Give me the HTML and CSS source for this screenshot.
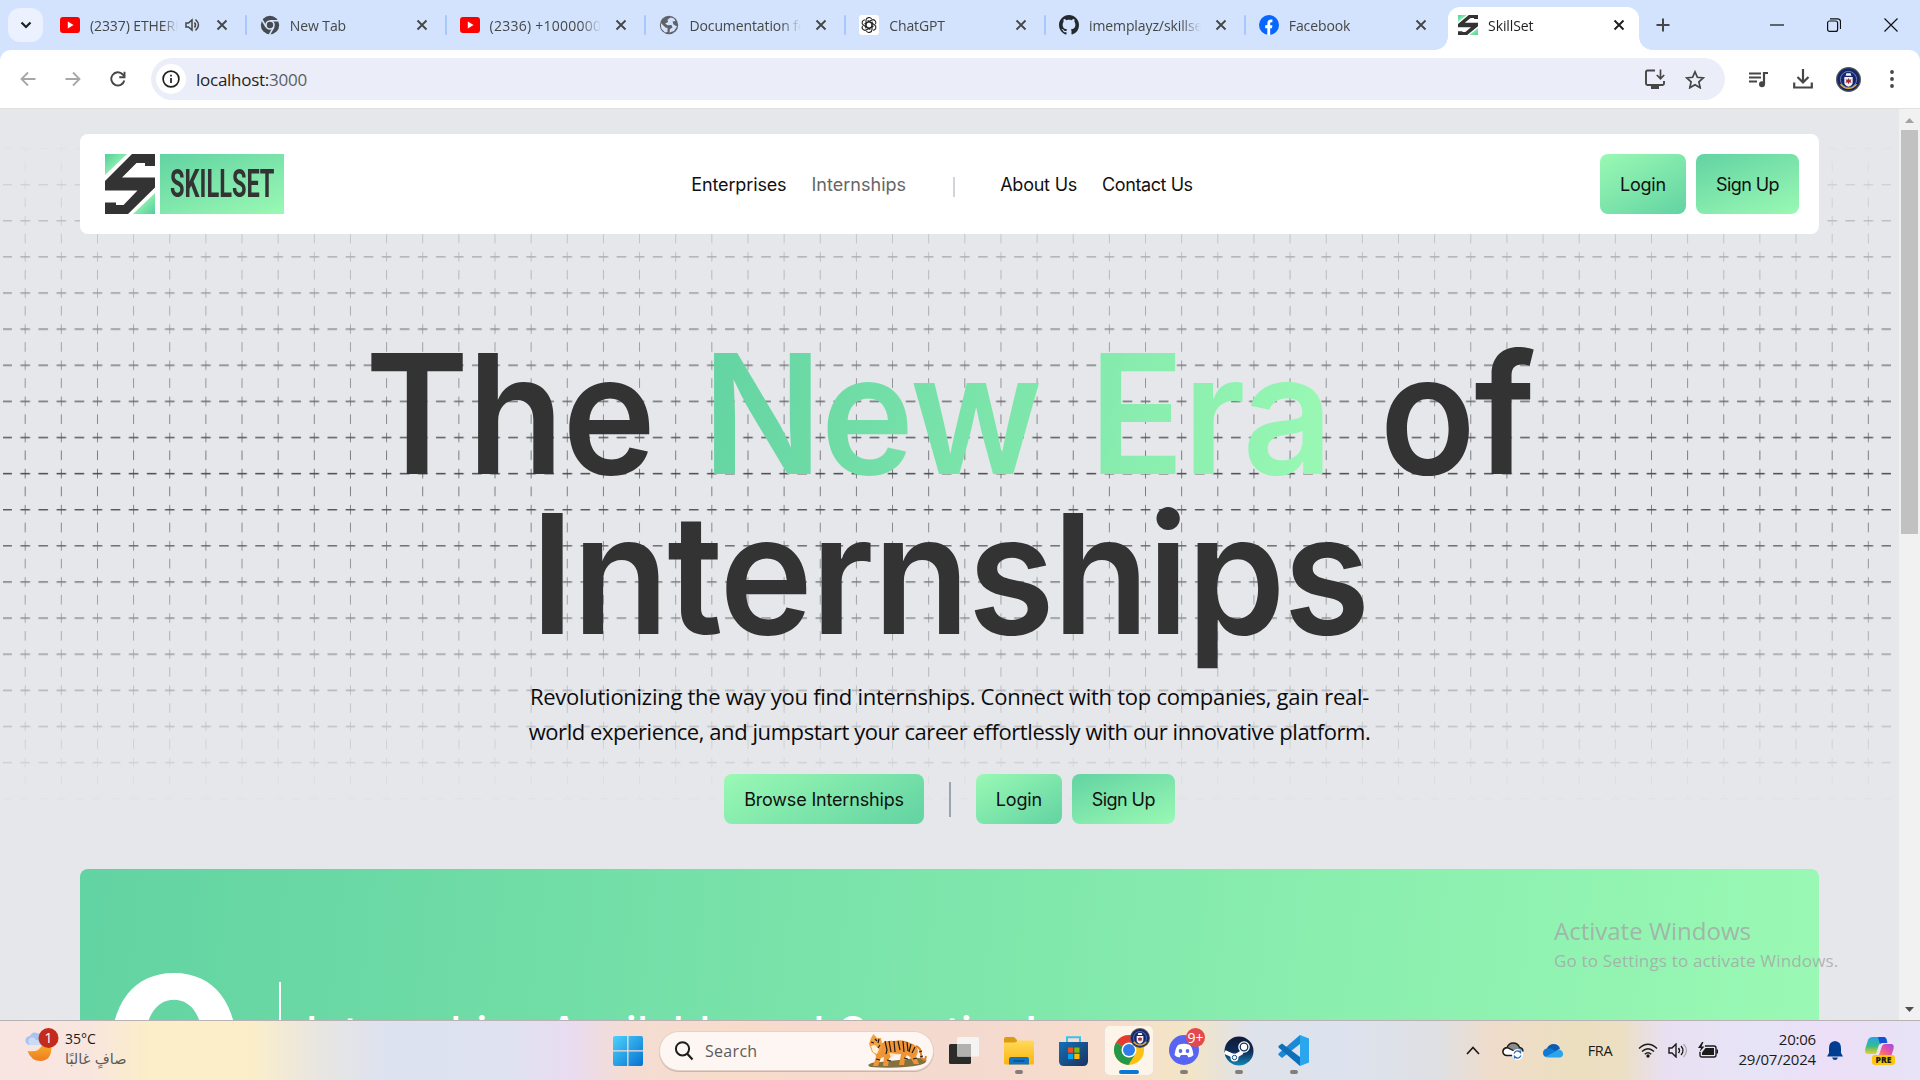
FILE: index.html
```html
<!DOCTYPE html>
<html lang="en">
<head>
<meta charset="utf-8">
<title>SkillSet</title>
<link rel="stylesheet" href="styles.css">
</head>
<body>
<svg class="defs" width="0" height="0" aria-hidden="true">
  <defs>
    <linearGradient id="mint" x1="0" y1="0" x2="1" y2="1"><stop offset="0" stop-color="#55cd9b"/><stop offset=".7" stop-color="#9af9b4"/></linearGradient>
    <linearGradient id="mintBack" x1="1" y1="1" x2="0" y2="0"><stop offset="0" stop-color="#55cd9b"/><stop offset=".7" stop-color="#9af9b4"/></linearGradient>
    <linearGradient id="winBlue" x1="0" y1="0" x2="1" y2="1"><stop offset="0" stop-color="#4cd2fc"/><stop offset="1" stop-color="#0671d0"/></linearGradient>
    <linearGradient id="folderYellow" x1="0" y1="0" x2="0" y2="1"><stop offset="0" stop-color="#ffd95c"/><stop offset="1" stop-color="#fcb50e"/></linearGradient>
    <linearGradient id="storeBlue" x1="0" y1="0" x2="1" y2="1"><stop offset="0" stop-color="#1270b8"/><stop offset="1" stop-color="#1c3160"/></linearGradient>
    <linearGradient id="steamBlue" x1="0" y1="0" x2="0" y2="1"><stop offset="0" stop-color="#111a35"/><stop offset=".5" stop-color="#0f2a56"/><stop offset="1" stop-color="#1387b8"/></linearGradient>
    <linearGradient id="moonOrange" x1="0" y1="0" x2="0" y2="1"><stop offset="0" stop-color="#f5b02d"/><stop offset="1" stop-color="#f07a1f"/></linearGradient>
    <linearGradient id="copilotA" x1="0" y1="0" x2="0" y2="1"><stop offset="0" stop-color="#1fa5ee"/><stop offset=".55" stop-color="#3dbb86"/><stop offset="1" stop-color="#f2d21c"/></linearGradient>
    <linearGradient id="copilotB" x1="1" y1="0" x2="0" y2="1"><stop offset="0" stop-color="#9a4be8"/><stop offset=".55" stop-color="#e8559f"/><stop offset="1" stop-color="#f98a4b"/></linearGradient>
    <symbol id="x" viewBox="0 0 12 12"><path d="M1.500 1.500l9 9M10.500 1.500l-9 9" stroke="currentColor" stroke-width="1.900" fill="none"/></symbol>
    <symbol id="yt" viewBox="0 0 20 16"><rect width="20" height="16" rx="3" fill="#f00"/><path d="M7.800 4.600L13.500 8l-5.700 3.400z" fill="#fff"/></symbol>
    <symbol id="skill" viewBox="0 0 50 60" preserveAspectRatio="none">
      <path d="M0 0h22L0 21z" fill="url(#mint)"/><path d="M50 39v21H28z" fill="url(#mintBack)"/>
      <path d="M27 0h23v12H40V9h-8.500L17 23.500h33v10L23 60H0V48.500h11V51h7.500l14-14.500H0V27z" fill="#333"/>
    </symbol>
    <symbol id="seal" viewBox="0 0 24 24"><circle cx="12" cy="12" r="12" fill="#555a52"/><circle cx="12" cy="12" r="10.800" fill="#14266e"/><path d="M3.500 16.500a10 10 0 0 0 17 0l-2 0a8 8 0 0 1-13 0z" fill="#e8b02c"/><circle cx="12" cy="12" r="7.800" fill="none" stroke="#8f9cc9" stroke-width=".7"/><path d="M8 9.500h8v5.500q0 2.500-4 4-4-1.500-4-4zM10 6h4l.8 2.500H9.200z" fill="#f4f6fa"/><path d="M12 10.500l.9 1.800 2-.6-.9 1.800.9 1.800-2-.6-.9 1.800-.9-1.800-2 .6.900-1.800-.9-1.800 2 .6z" fill="#a22d35"/></symbol>
  </defs>
</svg>

<div class="tabstrip">
  <button class="tab-search"><svg width="12" height="8" viewBox="0 0 12 8"><path d="M1.500 1.500L6 6l4.500-4.500" fill="none" stroke="#1f1f1f" stroke-width="2.200"/></svg></button>
  <div class="tab playing"><svg class="fav yt"><use href="#yt"/></svg><span class="label">(2337) ETHEREA</span><svg class="sound" width="15" height="14" viewBox="0 0 15 14"><path d="M1 5h2.500L7 2v10L3.500 9H1z" fill="none" stroke="#444746" stroke-width="1.500"/><path d="M9.500 4.500q2 2.500 0 5M10.500 1.500q6 5.500 0 11" fill="none" stroke="#444746" stroke-width="1.500"/></svg><svg class="close"><use href="#x"/></svg></div>
  <div class="tab"><svg class="fav" viewBox="0 0 20 20"><circle cx="10" cy="10" r="9.200" fill="#474b50"/><circle cx="10" cy="10" r="4" fill="none" stroke="#d3e3fd" stroke-width="1.600"/><path d="M10 5.800h9M6.200 12L1.800 4.500M13.800 12l-4.500 7.800" stroke="#d3e3fd" stroke-width="1.600"/></svg><span class="label">New Tab</span><svg class="close"><use href="#x"/></svg></div>
  <div class="tab"><svg class="fav yt"><use href="#yt"/></svg><span class="label wide">(2336) +1000000</span><svg class="close"><use href="#x"/></svg></div>
  <div class="tab"><svg class="fav" viewBox="0 0 20 20"><circle cx="10" cy="10" r="9.200" fill="#5f6368"/><path d="M11.500 2.500l-3 2.200.5 2.300-2.800 1.500 2.300 1.700 4-.2 1 2.500-2.500 1.500-.5 3.500 4.500-1.500 3-4.500-3.500-2-1-3 3-.5-1.500-2.500zM1.800 8l4.700 4.500 2 .5v4l-2.500.5-3.700-4z" fill="#d3e3fd"/></svg><span class="label">Documentation for</span><svg class="close"><use href="#x"/></svg></div>
  <div class="tab"><svg class="fav" viewBox="0 0 20 20"><rect width="20" height="20" rx="3" fill="#fff"/><g transform="translate(10 10)" fill="none" stroke="#222" stroke-width="1.100"><path id="p" d="M-3-1.700V-4.500a3 3 0 0 1 5.600-1.500M-3 1.600L.3 3.500 4.500 1"/><use href="#p" transform="rotate(60)"/><use href="#p" transform="rotate(120)"/><use href="#p" transform="rotate(180)"/><use href="#p" transform="rotate(240)"/><use href="#p" transform="rotate(300)"/></g></svg><span class="label">ChatGPT</span><svg class="close"><use href="#x"/></svg></div>
  <div class="tab"><svg class="fav" viewBox="0 0 16 16"><path fill="#24292f" d="M8 0C3.580 0 0 3.580 0 8c0 3.540 2.290 6.530 5.470 7.590.4.070.55-.17.55-.38 0-.19-.01-.82-.01-1.490-2.010.37-2.530-.49-2.690-.94-.09-.23-.48-.94-.82-1.130-.28-.15-.68-.52-.01-.53.63-.01 1.080.58 1.230.82.720 1.210 1.870.87 2.330.66.070-.52.280-.87.510-1.070-1.780-.2-3.640-.89-3.640-3.950 0-.87.310-1.590.82-2.150-.08-.2-.36-1.020.08-2.120 0 0 .67-.21 2.200.82.640-.18 1.320-.27 2-.27s1.360.09 2 .27c1.530-1.040 2.200-.82 2.200-.82.440 1.100.160 1.920.080 2.120.510.560.820 1.270.820 2.150 0 3.070-1.870 3.750-3.650 3.950.290.250.540.730.540 1.480 0 1.070-.01 1.930-.01 2.200 0 .210.150.460.550.380A8.010 8.010 0 0 0 16 8c0-4.420-3.580-8-8-8z"/></svg><span class="label">imemplayz/skillset</span><svg class="close"><use href="#x"/></svg></div>
  <div class="tab last"><svg class="fav" viewBox="0 0 20 20"><circle cx="10" cy="10" r="10" fill="#0866ff"/><path d="M8.300 20v-6.700H6.200v-3h2.100V9c0-3.500 1.600-4.900 5.100-4.500v2.700c-1.800-.1-2.200.2-2.200 1.500v1.600h2.200l-.4 3h-1.800V20z" fill="#fff"/></svg><span class="label">Facebook</span><svg class="close"><use href="#x"/></svg></div>
  <div class="tab active"><svg class="fav"><use href="#skill"/></svg><span class="label">SkillSet</span><svg class="close"><use href="#x"/></svg></div>
  <button class="new-tab"><svg width="14" height="14" viewBox="0 0 14 14"><path d="M7 .5v13M.5 7h13" stroke="#444746" stroke-width="2"/></svg></button>
  <div class="window-buttons">
    <svg viewBox="0 0 14 14"><path d="M0 7h14" stroke="#111" stroke-width="1.200"/></svg>
    <svg viewBox="0 0 14 14"><rect x=".6" y="3" width="10" height="10.400" rx="2" fill="none" stroke="#111" stroke-width="1.200"/><path d="M3 .8h7.500q3 0 3 3V11" fill="none" stroke="#111" stroke-width="1.200"/></svg>
    <svg viewBox="0 0 14 14"><path d="M.5.5l13 13M13.500.5l-13 13" stroke="#111" stroke-width="1.200"/></svg>
  </div>
</div>

<div class="toolbar">
  <svg class="nav-icon" viewBox="0 0 16 16"><path d="M15.500 8H2M8 1.500L1.500 8 8 14.500" fill="none" stroke="#a5a7a8" stroke-width="1.800"/></svg>
  <svg class="nav-icon" viewBox="0 0 16 16"><path d="M.5 8H14M8 1.500L14.500 8 8 14.500" fill="none" stroke="#a5a7a8" stroke-width="1.800"/></svg>
  <svg class="nav-icon" viewBox="0 0 16 16"><path d="M14.300 9.500A6.600 6.600 0 1 1 12.800 3.500L14.500 5.200" fill="none" stroke="#444746" stroke-width="1.900"/><path d="M14.500.8v5.400H9.300" fill="none" stroke="#444746" stroke-width="1.900"/></svg>
  <div class="omnibox">
    <span class="info"><svg width="18" height="18" viewBox="0 0 18 18"><circle cx="9" cy="9" r="7.900" fill="none" stroke="#1f1f1f" stroke-width="1.700"/><path d="M9 8v5M9 4.800v1.700" stroke="#1f1f1f" stroke-width="1.700"/></svg></span>
    <span class="url">localhost:<span class="port">3000</span></span>
    <svg class="install" width="20" height="20" viewBox="0 0 20 20"><path d="M10 1.500H2.500Q1 1.500 1 3v11.500Q1 16 2.500 16h15q1.500 0 1.500-1.500V12" fill="none" stroke="#444746" stroke-width="1.900"/><path d="M6 16.500h8V20H6z" fill="#444746"/><path d="M15.500.5v9M11.800 6l3.700 3.700L19.200 6" fill="none" stroke="#444746" stroke-width="1.700"/></svg>
    <svg class="star" width="20" height="19" viewBox="0 0 20 19"><path d="M10 1.800l2.400 5.500 6 .6-4.500 4 1.300 5.900L10 14.700l-5.200 3.100 1.300-5.900-4.500-4 6-.6z" fill="none" stroke="#444746" stroke-width="1.700"/></svg>
  </div>
  <svg class="playlist" width="20" height="17" viewBox="0 0 20 17"><path d="M0 2.500h12M0 6.500h12M0 10.500h8" stroke="#444746" stroke-width="1.900"/><path d="M19 2h-4v11" fill="none" stroke="#444746" stroke-width="2.200"/><circle cx="13" cy="13.200" r="3" fill="#444746"/></svg>
  <svg class="download" width="20" height="20" viewBox="0 0 20 20"><path d="M10 0v13M4.500 8l5.500 5.500L15.500 8M1.200 13.500v5h17.600v-5" fill="none" stroke="#444746" stroke-width="2.200"/></svg>
  <svg class="avatar" width="25" height="25"><use href="#seal"/></svg>
  <svg class="menu" width="4" height="18" viewBox="0 0 4 18"><circle cx="2" cy="2" r="1.900" fill="#444746"/><circle cx="2" cy="9" r="1.900" fill="#444746"/><circle cx="2" cy="16" r="1.900" fill="#444746"/></svg>
</div>

<div class="viewport">
  <main class="page">
    <svg class="grid" width="1899" height="740" aria-hidden="true">
      <defs><pattern id="dash" width="36.140" height="36.120" patternUnits="userSpaceOnUse" x="7.100" y="21.200">
        <path d="M13.300 18.300h9.600M0 18.300h4.800M31.340 18.300h4.800" stroke="#2c2c2e" stroke-width="1.300"/>
        <path d="M18.100 13.500v9.600M18.100 0v4.800M18.100 31.320v4.800" stroke="#2c2c2e" stroke-opacity=".8" stroke-width=".9"/>
      </pattern></defs>
      <rect x="3" y="33" width="1888" height="670" fill="url(#dash)"/>
    </svg>
    <header class="site-header">
      <div class="brand"><svg width="50" height="60"><use href="#skill"/></svg><span class="brand-name"><span>SKILLSET</span></span></div>
      <nav>
        <a>Enterprises</a><a class="muted">Internships</a><span class="rule"></span><a class="tight">About Us</a><a class="tighter">Contact Us</a>
      </nav>
      <div class="auth"><a class="btn light">Login</a><a class="btn deep">Sign Up</a></div>
    </header>
    <h1><span class="line">The <span class="era">New Era</span> of</span><span class="line">Internships</span></h1>
    <p class="lead"><span class="first">Revolutionizing the way you find internships. Connect with top companies, gain real-</span><span class="second">world experience, and jumpstart your career effortlessly with our innovative platform.</span></p>
    <div class="actions"><a class="btn light browse">Browse Internships</a><span class="rule"></span><a class="btn light">Login</a><a class="btn deep">Sign Up</a></div>
    <section class="stats"><strong>0</strong><span class="stat-rule"></span><span class="caption">Internships Available and Counting!</span></section>
  </main>
  <div class="scrollbar"><svg width="9" height="5" viewBox="0 0 9 5"><path d="M0 5l4.500-5L9 5z" fill="#a3a3a3"/></svg><span class="thumb"></span><svg width="9" height="5" viewBox="0 0 9 5"><path d="M0 0l4.500 5L9 0z" fill="#505050"/></svg></div>
  <div class="watermark"><span class="wm-title">Activate Windows</span><span class="wm-text">Go to Settings to activate Windows.</span></div>
</div>

<div class="taskbar">
  <div class="weather">
    <svg width="36" height="36" viewBox="0 0 36 36">
      <path d="M5 17a4.500 4.500 0 0 1 0-9Q7 3 12 5q5 1 4 6 3 6-1 6z" fill="#a9c3f0"/><path d="M5 17a4.500 4.500 0 0 1 0-7q4-2 6 2 4 0 4 5z" fill="#cadbf8"/>
      <path d="M26 16q2 16-10 17Q6 33 2.500 23q12 2 15-7z" fill="url(#moonOrange)"/>
      <circle cx="23.500" cy="10" r="10" fill="#c42b1c"/><text x="23.500" y="15" text-anchor="middle" fill="#fff" font-size="14">1</text>
    </svg>
    <div class="weather-text"><span>35°C</span><span class="condition" lang="ar" dir="rtl">صافٍ غالبًا</span></div>
  </div>
  <div class="apps">
    <span class="app"><svg width="30" height="30" viewBox="0 0 30 30"><path d="M0 2q0-2 2-2h12.200v14.200H0zM15.500 0H28q2 0 2 2v12.200H15.500zM0 15.500h14.200V30H2q-2 0-2-2zM15.500 15.500H30V28q0 2-2 2H15.500z" fill="url(#winBlue)"/></svg></span>
    <div class="search">
      <svg width="20" height="20" viewBox="0 0 20 20"><circle cx="8.500" cy="7.800" r="6.600" fill="none" stroke="#1d1d1d" stroke-width="2"/><path d="M13 12.500l5.500 6" stroke="#1d1d1d" stroke-width="2.200"/></svg>
      <span>Search</span>
      <svg class="tiger" width="59" height="34" viewBox="0 0 59 34">
        <path d="M0 31q3-3 12-3l28-3q10-2 18 0 2 4-6 6-20 4-50 2z" fill="#84713f"/>
        <path d="M14 9q5-3 12-2 10-2 16 2 8 2 8 9l-2 5 3 7h-5l-4-7-3-2-2 4-1 6h-5l2-11-9 1-3 4-1 7h-5l1-9-3 1-3 8H5l3-9-1-6z" fill="#ee9538"/>
        <path d="M48 12q5 2 5 8t4 6l1-4" fill="none" stroke="#d9852c" stroke-width="2"/>
        <path d="M3 4L5.500 0 9 4l4 0 1 6-1 7-5 4-4-3-3-8z" fill="#f3a044"/>
        <path d="M3 12l4-1 4 4-2 5-4-2z" fill="#fff0dc"/><path d="M13 19l3 4M21 19l10 1-8 3z" fill="#fbe6c4"/>
        <path d="M17 7l2 9-1 4M21 7l2 11M26 7l1 11M30 7l2 9M35 7l1 11M39 8l1 9M43 10l-2 8M47 13l-3 6M8 25l4 1M19 26l4 1M36 24l4 1M45 25l4-1M3 8l3 1M7 5l2 2M11 5l-1 4M12 11l-2 3M54 17l-3 1M55 22l-3 1" stroke="#2a1c10" stroke-width="1.200" fill="none"/>
      </svg>
    </div>
    <span class="app"><svg width="30" height="28" viewBox="0 0 30 28"><rect x="0" y="7" width="22" height="20" rx="1.500" fill="#2b2b2a"/><rect x="8" y="0" width="22" height="19.500" rx="1.500" fill="#f4f4f4"/><path d="M8 7h14v12.500H8z" fill="#b2b1b0"/></svg></span>
    <span class="app open"><svg width="30" height="28" viewBox="0 0 30 28"><path d="M0 2q0-2 2-2h8l3 3v5H0z" fill="#dc9b12"/><path d="M0 5.500l11 0 3-2H28q2 0 2 2V26q0 1.500-1.500 1.500h-27Q0 27.500 0 26z" fill="url(#folderYellow)"/><path d="M5 27.500V22q0-2 2-2h16q2 0 2 2v5.500z" fill="#1272c4"/><path d="M9.500 24h11" stroke="#0b4c8c" stroke-width="1.500"/></svg></span>
    <span class="app"><svg width="29" height="30" viewBox="0 0 29 30"><path d="M8 8V1.200h13V8" fill="none" stroke="#38c2f2" stroke-width="2"/><path d="M0 6h29v19q0 5-5 5H5q-5 0-5-5z" fill="url(#storeBlue)"/><path d="M9 11.500h5.200v5.200H9z" fill="#f25022"/><path d="M15.300 11.500h5.200v5.200h-5.200z" fill="#7fba00"/><path d="M9 17.800h5.200V23H9z" fill="#00a4ef"/><path d="M15.300 17.800h5.200V23h-5.200z" fill="#ffb900"/></svg></span>
    <span class="app current"><svg width="36" height="38" viewBox="0 0 36 38">
      <circle cx="15" cy="22" r="15" fill="#fbc116"/><path d="M15 22L2 14.500A15 15 0 0 1 28 14.500z" fill="#e33b2e"/><path d="M2 14.500A15 15 0 0 0 14.500 37L21.500 25.500 15 22z" fill="#23984b"/><circle cx="15" cy="22" r="7.500" fill="#fff"/><circle cx="15" cy="22" r="6" fill="#2f7de9"/><use href="#seal" x="16" y="0" width="20" height="20"/></svg></span>
    <span class="app open"><svg width="36" height="38" viewBox="0 0 36 38"><circle cx="15" cy="22" r="15" fill="#5865f2"/><path d="M10 16.500q5-1.500 10 0 3 1 4.500 10.500-2 2-5 2.500l-1.500-2.500h-6L10.500 29.500q-3-.5-5-2.500Q7 17.500 10 16.500z" fill="#fff"/><ellipse cx="11.500" cy="23" rx="1.800" ry="2" fill="#5865f2"/><ellipse cx="18.500" cy="23" rx="1.800" ry="2" fill="#5865f2"/><circle cx="26.500" cy="9.500" r="9.500" fill="#e5484d"/><text x="26.500" y="14.500" text-anchor="middle" fill="#fff" font-size="14">9+</text></svg></span>
    <span class="app open"><svg width="30" height="30" viewBox="0 0 30 30"><circle cx="15" cy="15" r="14.500" fill="url(#steamBlue)"/><path d="M.8 16l10 4.500L17 17l2-4" fill="none" stroke="#fff" stroke-width="4"/><circle cx="20" cy="11" r="5.800" fill="#fff"/><circle cx="20" cy="11" r="3.800" fill="none" stroke="#17305e" stroke-width="1.300"/><circle cx="10.500" cy="21.500" r="4" fill="#fff"/><circle cx="10.500" cy="21.500" r="2.200" fill="none" stroke="#1a4e80" stroke-width="1"/></svg></span>
    <span class="app open"><svg width="31" height="31" viewBox="0 0 31 31"><path d="M22 0l9 3.500v24L22 31z" fill="#2aa6ee"/><path d="M22 0v9L4 23l-3.500-3q-.5-1 .3-1.800z" fill="#1b8ad6"/><path d="M22 31v-9L4 8.500.6 11q-.6 1 .2 1.800z" fill="#0f6fb8"/></svg></span>
  </div>
  <div class="tray">
    <span class="slot"><svg width="14" height="9" viewBox="0 0 14 9"><path d="M1 8l6-6.500L13 8" fill="none" stroke="#1b1b1b" stroke-width="1.700"/></svg></span>
    <span class="slot"><svg width="22" height="18" viewBox="0 0 22 18"><path d="M5 13.500q-4-.5-4-4T5 5.500Q7 1 11 1q5 0 6.500 4.500 3.500.5 3.500 4" fill="#8b8b8b" stroke="#1d1d1d" stroke-width="1.400"/><path d="M5 13.500q-4-.5-4-4 1-4 5-3.500l8 4-3 3.500z" fill="#fff" stroke="#1d1d1d" stroke-width="1.300"/><circle cx="15.500" cy="12.500" r="5.500" fill="#fff"/><path d="M12 11.500q1.500-3 4-2.500 1.500.3 2.500 1.500V8.500M19 13.500q-1.500 3-4 2.500-1.500-.3-2.500-1.500v2" fill="none" stroke="#1b6fc2" stroke-width="1.300"/></svg></span>
    <span class="slot"><svg width="21" height="14" viewBox="0 0 21 14"><path d="M3.500 5Q6 0 10.500 0q5 0 6.500 4.500L12 8z" fill="#0a5cb0"/><path d="M0 9q0-4 4-4.500 5-1 9 3.500L3 13Q0 12 0 9z" fill="#1179d2"/><path d="M2.500 13L13 7q3-3 6 0 3 5-2 6.500H5z" fill="#2ba4ec"/></svg></span>
    <span class="slot lang">FRA</span>
    <span class="slot narrow"><svg width="20" height="15" viewBox="0 0 20 15"><path d="M1 5.500q9-8.500 18 0M4 8.500q6-5.500 12 0M6.800 11.300q3.200-3 6.400 0" fill="none" stroke="#1b1b1b" stroke-width="1.500"/><circle cx="10" cy="13" r="1.700" fill="#1b1b1b"/></svg></span>
    <span class="slot narrow"><svg width="20" height="15" viewBox="0 0 20 15"><path d="M1 5h3l4-4v13L4 10H1z" fill="none" stroke="#1b1b1b" stroke-width="1.400"/><path d="M10.500 5q2 2.500 0 5M13 3q4 4.500 0 9" fill="none" stroke="#1b1b1b" stroke-width="1.400"/><path d="M15.500 1q6 6.500 0 13" fill="none" stroke="#aaa" stroke-width="1.300"/></svg></span>
    <span class="slot narrow"><svg width="20" height="17" viewBox="0 0 20 17"><path d="M7 4h9q2 0 2 2v7q0 2-2 2H4q-2 0-2-2v-3" fill="none" stroke="#1b1b1b" stroke-width="1.400"/><path d="M7.500 6H16v7H4v-2.500z" fill="#1b1b1b"/><path d="M18.500 7.500H20v4h-1.500zM4 0L0 6h3L1.500 10 6.500 4.500H3.500L5.500 0z" fill="#1b1b1b"/></svg></span>
    <div class="clock"><span>20:06</span><span>29/07/2024</span></div>
    <span class="slot bell"><svg width="16" height="19" viewBox="0 0 16 19"><path d="M8 0q6 .5 6 7v5l2 3.500H0L2 12V7Q2 .5 8 0zM5 16.500h6Q10 19 8 19t-3-2.500z" fill="#003e92"/></svg></span>
    <span class="slot copilot"><svg width="30" height="29" viewBox="0 0 30 29"><path d="M8 1h11q3 0 3.500 6h-5q-3 0-4 3l-2.500 8H3Q-1 18 .5 12L3 4q1-3 5-3z" fill="url(#copilotA)"/><path d="M13 1h6q2.500 0 3 6h-5q-1.500 0-2 1z" fill="#1650d8"/><path d="M20 8h6q3.500 0 2.500 5l-2 6H14l3-9q.8-2 3-2z" fill="url(#copilotB)"/><rect x="7" y="19" width="23" height="10" rx="3" fill="#fcc60c"/><text x="18.500" y="27" text-anchor="middle" font-size="8.500" font-weight="800" fill="#1a1a1a">PRE</text></svg></span>
  </div>
</div>
</body>
</html>
```
FILE: styles.css
```css
* { box-sizing: border-box; }
body { margin: 0; width: 1920px; height: 1080px; overflow: hidden; display: flex; flex-direction: column; font-family: "Open Sans", "Noto Sans", sans-serif; background: #d3e3fd; }
svg { display: block; flex: none; }
.defs { position: absolute; }
button { border: 0; padding: 0; display: flex; align-items: center; justify-content: center; }

/* Tab strip */
.tabstrip { display: flex; align-items: flex-start; height: 50px; padding-left: 8px; background: #d3e3fd; }
.tab-search { width: 35px; height: 34px; margin: 8px 4px 0 0; border-radius: 12px; background: #ebf1fe; }
.tab { display: flex; align-items: center; width: 199.800px; height: 36px; margin-top: 7px; padding-left: 13px; color: #444746; font-size: 14px; letter-spacing: -.1px; }
.tab::after { content: ""; width: 2px; height: 20px; margin-left: 17px; border-radius: 1px; background: #a8c7fa; }
.tab.last::after { visibility: hidden; }
.fav { width: 20px; height: 20px; }
.fav.yt { height: 16px; }
.label { flex: 1; margin: 0 14px 0 10px; white-space: nowrap; overflow: hidden; -webkit-mask: linear-gradient(90deg, #000 82%, transparent); mask: linear-gradient(90deg, #000 82%, transparent); }
.label.wide { letter-spacing: .25px; }
.playing .label { margin-right: 7px; }
.sound { margin-right: 16px; }
.close { width: 12px; height: 12px; }
.tab.active { position: relative; width: 191px; height: 43px; margin-left: 2.500px; padding: 0 14px 7px 10px; border-radius: 12px 12px 0 0; background: #fff; color: #1f1f1f; }
.tab.active::before, .tab.active::after { content: ""; position: absolute; bottom: 0; width: 13px; height: 13px; margin: 0; border-radius: 0; }
.tab.active::before { left: -13px; background: radial-gradient(circle at 0 0, transparent 12.500px, #fff 13px); }
.tab.active::after { right: -13px; background: radial-gradient(circle at 100% 0, transparent 12.500px, #fff 13px); }
.new-tab { width: 34px; height: 34px; margin: 8px 0 0 7px; background: none; }
.window-buttons { display: flex; gap: 43px; margin: 18px 22px 0 auto; }
.window-buttons svg { width: 14px; height: 14px; }

/* Toolbar */
.toolbar { display: flex; align-items: center; height: 59px; padding-left: 20px; background: #fff; border-bottom: 1px solid #e0e0e0; border-radius: 11px 11px 0 0; }
.nav-icon { width: 16px; height: 16px; margin-right: 29px; }
.omnibox { display: flex; align-items: center; width: 1574px; height: 42px; margin-left: -4px; padding-left: 5px; border-radius: 21px; background: #ebeef8; }
.info { display: flex; align-items: center; justify-content: center; width: 30px; height: 30px; border-radius: 50%; background: #fff; }
.url { margin-left: 10px; font-size: 17px; letter-spacing: -.26px; color: #1f1f1f; }
.port { color: #5c5f62; }
.install { margin-left: auto; }
.star { margin: 0 20px 0 20px; }
.playlist { margin-left: 24px; }
.download { margin-left: 24px; }
.avatar { margin-left: 23px; }
.menu { margin-left: 29px; }

/* Viewport */
.viewport { position: relative; display: flex; height: 911px; overflow: hidden; background: #e5e7eb; }
.page { position: relative; width: 1899px; padding: 25px 80px 0; }
.page > * { position: relative; }
.page > .grid { position: absolute; left: 0; top: 0; opacity: .85; -webkit-mask: linear-gradient(transparent 29px, #000 364px, transparent 699px); mask: linear-gradient(transparent 29px, #000 364px, transparent 699px); }
.site-header { display: flex; justify-content: space-between; height: 100px; padding: 20px 20px 20px 25px; border-radius: 8px; background: #fff; }
.brand { display: flex; gap: 5px; }
.brand-name { display: flex; align-items: center; justify-content: center; width: 124px; background: linear-gradient(160deg, #62d3a2, #9af9b4); color: #333; }
.brand-name span { font: 700 38px/58px Roboto, sans-serif; transform: scaleX(.62); }
nav { display: flex; align-items: center; gap: 25px; font: 400 18px Inter, sans-serif; letter-spacing: -.13px; color: #111; }
nav .muted { color: #666; letter-spacing: .02px; }
nav .tight { letter-spacing: -.22px; }
nav .tighter { letter-spacing: -.42px; }
nav .rule { width: 2px; height: 20px; margin: 5px 20px 0 22px; background: #d1d5db; }
.auth { display: flex; gap: 10px; }
.btn { display: flex; align-items: center; padding: 0 20px; border-radius: 8px; font: 400 18px Inter, sans-serif; letter-spacing: -.2px; color: #111; }
.btn.light { background: linear-gradient(150deg, #9af9b4, #62d3a2); }
.btn.deep { background: linear-gradient(160deg, #62d3a2, #9af9b4); letter-spacing: -.58px; }

h1 { margin: 100px 0 0; font: 590 166px/160px Inter, sans-serif; letter-spacing: -1.600px; word-spacing: 10.500px; color: #333; transform: scaleX(.95); }
h1 .line { display: block; text-align: center; white-space: nowrap; }
h1 .line:last-child { letter-spacing: -1.900px; }
.era { background: linear-gradient(100deg, #62d3a2, #9af9b4); -webkit-background-clip: text; background-clip: text; color: transparent; }
.lead { display: flex; flex-direction: column; align-items: center; margin: 25px 0; font-size: 22px; line-height: 35px; color: #0b0b0b; white-space: nowrap; }
.lead .first { letter-spacing: -.27px; }
.lead .second { letter-spacing: -.43px; }
.actions { display: flex; align-items: center; justify-content: center; height: 50px; }
.actions .btn { height: 50px; margin-right: 10px; }
.actions .btn:last-child { margin-right: 0; }
.actions .browse { margin-right: 0; letter-spacing: -.18px; }
.actions .rule { width: 2px; height: 35px; margin: 0 25px; background: #9ca3af; }
.stats { display: flex; align-items: flex-start; height: 300px; margin-top: 45px; border-radius: 8px 8px 0 0; background: linear-gradient(96deg, #62d3a2, #9af9b4); color: #fff; }
.stats strong { width: 188px; padding-top: 86px; text-align: center; font: 700 218px/200px Inter, sans-serif; }
.stat-rule { width: 2px; height: 150px; margin: 113px 25px 0 11px; background: #fff; }
.caption { margin-top: 138px; font: 550 42px/50px Inter, sans-serif; letter-spacing: .65px; white-space: nowrap; }

.scrollbar { display: flex; flex-direction: column; align-items: center; width: 21px; padding: 9px 0 8px; background: #f1f1f1; }
.thumb { width: 17px; height: 404px; margin: 7px 0 auto; background: #c1c1c1; }
.watermark { position: absolute; left: 1554px; top: 805px; display: flex; flex-direction: column; color: rgba(165, 165, 168, .8); white-space: nowrap; }
.wm-title { font-size: 24px; line-height: 34px; }
.wm-text { font-size: 17px; line-height: 25px; letter-spacing: .17px; }

/* Taskbar */
.taskbar { display: flex; height: 60px; border-top: 1px solid #b9b2b5; color: #1b1b1b;
  background: linear-gradient(90deg, #f8e5e2 0, #f8e6de 90px, #fbeec8 150px, #fbeec9 250px, #e8e6e2 320px, #dce2f0 390px, #dfe2f1 510px, #e9dcf1 570px, #f5dcd3 630px, #f7dccb 720px, #f4d9cf 960px, #f7ddcb 1110px, #f3e5c6 1190px, #dfe2ea 1250px, #dce2ee 1340px, #dfe0e3 1440px, #efdccb 1490px, #ecdfc0 1570px, #ecdfc2 1620px, #e8e0f2 1665px, #e7e4f7 1760px, #ecdff7 1830px, #e7e3f6 1920px); }
.weather { display: flex; width: 600px; padding: 7px 0 0 25px; }
.weather-text { display: flex; flex-direction: column; margin: 0 0 0 4px; font-size: 14px; line-height: 21px; }
.condition { color: #5b5a58; font-family: "DejaVu Sans", sans-serif; font-size: 14.500px; }
.apps { display: flex; }
.app { display: flex; flex-direction: column; align-items: center; justify-content: center; position: relative; width: 55px; height: 59px; }
.app.open::after, .app.current::after { content: ""; position: absolute; bottom: 6px; width: 8px; height: 4px; border-radius: 2px; background: #857d7a; }
.app.current::after { width: 20px; background: #0a78d4; }
.app.current::before { content: ""; position: absolute; top: 5px; width: 48px; height: 49px; border-radius: 5px; background: #fdf4ea; box-shadow: 0 0 0 1px #eee0d4; }
.app svg[height="38"] { position: relative; margin: 0 0 7px 6px; }
.search { display: flex; align-items: center; width: 273px; height: 38px; margin: 11px 3px 0 5px; padding: 0 6px 0 14px; border-radius: 20px; background: #fdf6f2; box-shadow: 0 0 0 1px #e6d2c8, 0 1px 0 1px #c9b6ae; font-size: 16px; letter-spacing: .3px; color: #5d5b5a; }
.search span { margin: 0 auto 0 11px; }
.tray { display: flex; margin-left: auto; padding-right: 14px; }
.slot { display: flex; align-items: center; justify-content: center; width: 40px; }
.slot.lang { width: 60px; padding-right: 6px; font-size: 14.500px; letter-spacing: -.3px; }
.slot.narrow { width: 30px; }
.clock { display: flex; flex-direction: column; align-items: flex-end; width: 93px; padding-top: 8px; font-size: 15px; line-height: 20px; letter-spacing: -.2px; }
.slot.bell { width: 38px; }
.slot.copilot { width: 52px; }
```
